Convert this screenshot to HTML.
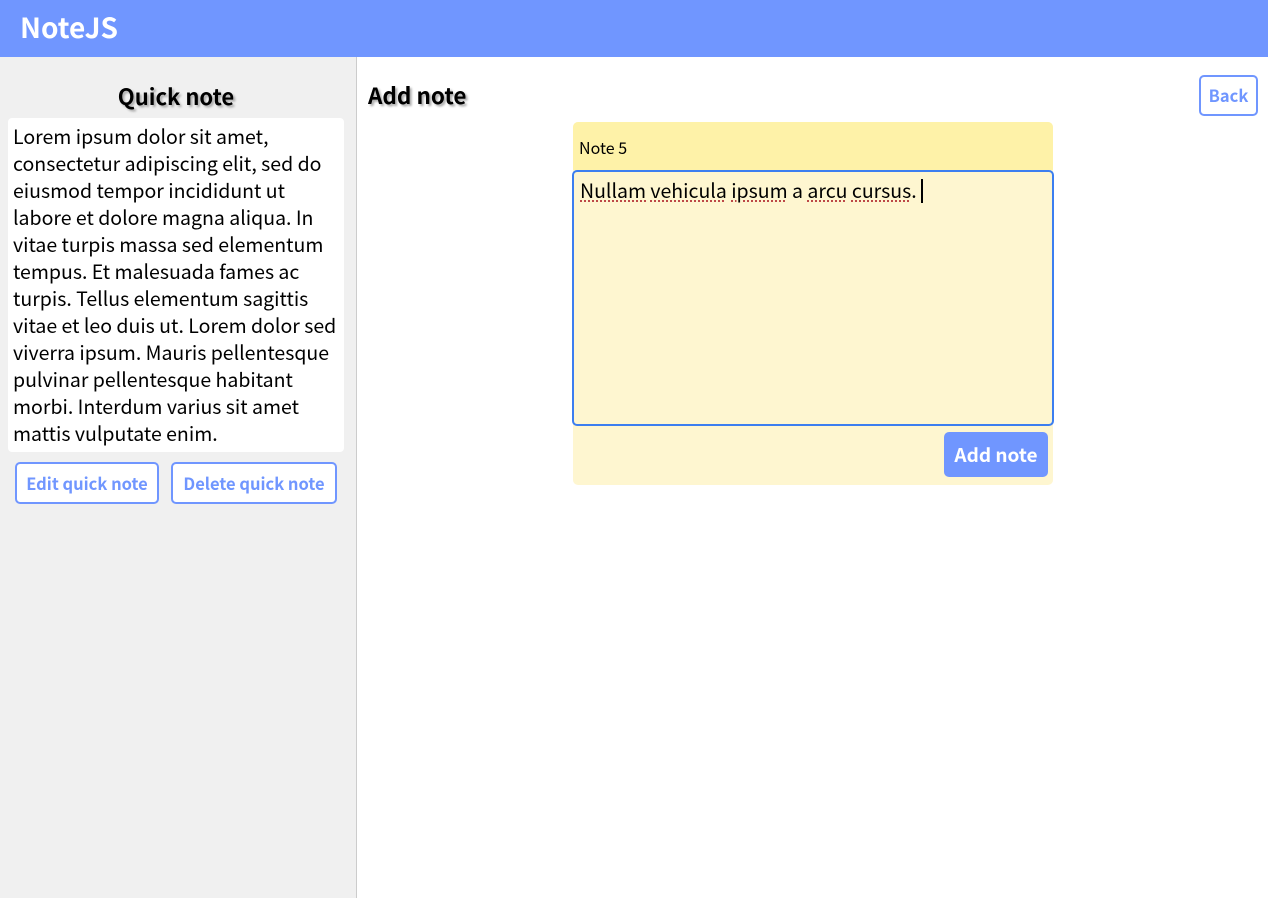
<!DOCTYPE html>
<html><head><meta charset="utf-8"><style>
*{box-sizing:border-box;margin:0;padding:0}
body{width:1268px;height:898px;overflow:hidden;font-family:"Noto Sans CJK JP","Liberation Sans",sans-serif;background:#fff;color:#000;position:relative}
.hdr{position:absolute;left:0;top:0;width:1268px;height:57px;background:#7096ff;color:#fff;font-weight:bold;font-size:28px;padding-left:20px;line-height:55px}
.side{position:absolute;left:0;top:57px;width:357px;height:841px;background:#f0f0f0;border-right:1px solid #ccc}
.side h2{position:absolute;left:0;width:352px;top:24px;text-align:center;font-size:22px;text-shadow:2px 2px 2px #aaa;line-height:30px}
.qn{position:absolute;left:8px;top:61px;width:336px;height:334px;background:#fff;border-radius:4px;padding:4px 5px;font-size:19.5px;line-height:27px}
.ob{position:absolute;top:405px;height:42px;border:2px solid #7096ff;border-radius:5px;background:#fff;color:#7096ff;font-weight:bold;font-size:16.5px;line-height:38px;text-align:center}
h1{position:absolute;left:368px;top:80px;font-size:22.5px;line-height:30px;text-shadow:2px 2px 2px #aaa}
.back{position:absolute;left:1199px;top:75px;width:59px;height:41px;border:2px solid #7096ff;border-radius:5px;color:#7096ff;font-weight:bold;font-size:16.5px;line-height:37px;text-align:center}
.card{position:absolute;left:573px;top:122px;width:480px;height:363px;background:#fef6d0;border-radius:5px}
.title{position:absolute;left:0;top:0;width:480px;height:48px;background:#fef2a8;border-radius:5px 5px 0 0;font-size:16px;line-height:50px;padding-left:6px}
.ta{position:absolute;left:-1px;top:48px;width:482px;height:256px;border:2px solid #3c7ef0;border-radius:5px;background:#fef6d0;font-size:19.5px;padding:4px 6px;line-height:27px}
.ta u{text-decoration:underline dotted #b44;text-underline-offset:3px}
.cur{display:inline-block;width:2px;height:24px;background:#000;vertical-align:-5px;margin-left:4px}
.add{position:absolute;left:371px;top:310px;width:104px;height:45px;background:#7096ff;color:#fff;border-radius:5px;font-weight:bold;font-size:19px;text-align:center;line-height:45px}
</style></head><body>
<div class="hdr">NoteJS</div>
<div class="side">
<h2>Quick note</h2>
<div class="qn">Lorem ipsum dolor sit amet, consectetur adipiscing elit, sed do eiusmod tempor incididunt ut labore et dolore magna aliqua. In vitae turpis massa sed elementum tempus. Et malesuada fames ac turpis. Tellus elementum sagittis vitae et leo duis ut. Lorem dolor sed viverra ipsum. Mauris pellentesque pulvinar pellentesque habitant morbi. Interdum varius sit amet mattis vulputate enim.</div>
<div class="ob" style="left:15px;width:144px">Edit quick note</div>
<div class="ob" style="left:171px;width:166px">Delete quick note</div>
</div>
<h1>Add note</h1>
<div class="back">Back</div>
<div class="card">
<div class="title">Note 5</div>
<div class="ta"><u>Nullam</u> <u>vehicula</u> <u>ipsum</u> a <u>arcu</u> <u>cursus</u>.<span class="cur"></span></div>
<div class="add">Add note</div>
</div>
</body></html>
